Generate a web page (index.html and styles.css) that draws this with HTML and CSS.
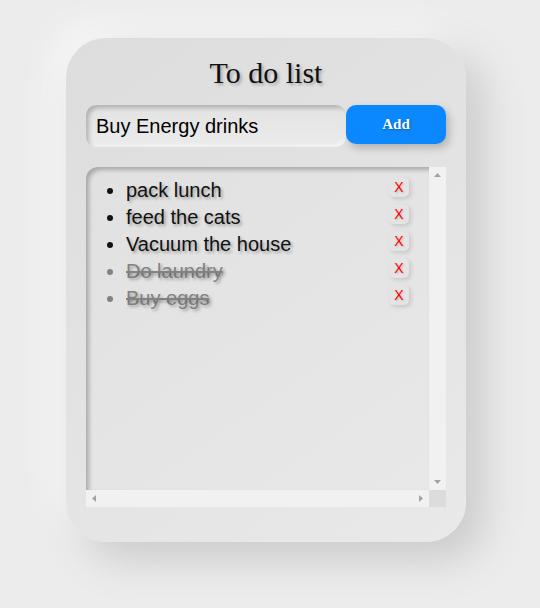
FILE: index.html
```html
<!DOCTYPE html>
<html lang="en">
<head>
<meta charset="utf-8">
<title>To do list</title>
<link rel="stylesheet" href="styles.css">
</head>
<body>
  <div class="card">
    <h1 class="title">To do list</h1>
    <div class="entry">
      <input class="entry-input" type="text" value="Buy Energy drinks">
      <button class="add-btn">Add</button>
    </div>
    <div class="list-box">
      <div class="list-view">
        <ul class="todo-list">
          <li class="todo"><button class="del-btn">X</button><span class="todo-text">pack lunch</span></li>
          <li class="todo"><button class="del-btn">X</button><span class="todo-text">feed the cats</span></li>
          <li class="todo"><button class="del-btn">X</button><span class="todo-text">Vacuum the house</span></li>
          <li class="todo done"><button class="del-btn">X</button><span class="todo-text">Do laundry</span></li>
          <li class="todo done"><button class="del-btn">X</button><span class="todo-text">Buy eggs</span></li>
        </ul>
      </div>
      <div class="vbar">
        <svg class="arrow" width="17" height="17" viewBox="0 0 17 17"><path d="M5 10h7l-3.5-4z" fill="#a3a3a3"/></svg>
        <svg class="arrow" width="17" height="17" viewBox="0 0 17 17"><path d="M5 7h7l-3.5 4z" fill="#a3a3a3"/></svg>
      </div>
      <div class="hbar">
        <svg class="arrow" width="17" height="17" viewBox="0 0 17 17"><path d="M10 5v7l-4-3.5z" fill="#a3a3a3"/></svg>
        <svg class="arrow" width="17" height="17" viewBox="0 0 17 17"><path d="M7 5v7l4-3.5z" fill="#a3a3a3"/></svg>
      </div>
      <div class="corner"></div>
    </div>
  </div>
</body>
</html>
```
FILE: styles.css
```css
html {
  min-height: 100%;
  background: #ececec;
}
body {
  margin: 0;
  min-height: 608px;
  box-sizing: border-box;
  padding: 38px 0 0 66px;
  background: #ececec;
  font-family: "Liberation Serif", "Times New Roman", serif;
}
.card {
  width: 400px;
  height: 504px;
  box-sizing: border-box;
  padding: 18px 20px 35px;
  border-radius: 40px;
  background: linear-gradient(145deg, #dddddd, #e9e9e9);
  box-shadow: 18px 18px 40px #cbcbcb, -14px -14px 30px #f7f7f7;
}
.title {
  margin: 0;
  font-size: 30px;
  font-weight: normal;
  line-height: 34px;
  text-align: center;
  color: #111;
  text-shadow: 2px 2px 3px rgba(0,0,0,0.25);
}
.entry {
  display: flex;
  align-items: flex-start;
  margin-top: 15px;
}
.entry-input {
  width: 260px;
  height: 42px;
  box-sizing: border-box;
  border: none;
  outline: none;
  border-radius: 10px;
  padding: 0 0 0 10px;
  font-family: "Liberation Sans", Arial, sans-serif;
  font-size: 20px;
  color: #000;
  background: linear-gradient(180deg, #e3e3e3, #ebebeb);
  box-shadow: inset 3px 3px 4px rgba(0,0,0,0.22), inset -2px -2px 4px rgba(255,255,255,0.5);
}
.add-btn {
  width: 100px;
  height: 39px;
  border: none;
  border-radius: 10px;
  background: #0b88fe;
  color: #fff;
  font-family: "Liberation Serif", "Times New Roman", serif;
  font-weight: bold;
  font-size: 15px;
  text-shadow: 1px 1px 2px rgba(0,0,0,0.3);
  box-shadow: 3px 4px 8px rgba(0,0,0,0.22);
  padding: 0;
}
.list-box {
  margin-top: 20px;
  width: 360px;
  height: 340px;
  display: grid;
  grid-template-columns: 1fr 17px;
  grid-template-rows: 1fr 17px;
}
.list-view {
  overflow: hidden;
  border-radius: 12px 0 0 0;
  background: linear-gradient(145deg, #e1e1e1, #e8e8e8);
  box-shadow: inset 3px 3px 4px rgba(0,0,0,0.25);
}
.vbar {
  background: #f1f1f1;
  display: flex;
  flex-direction: column;
  justify-content: space-between;
}
.hbar {
  background: #f1f1f1;
  display: flex;
  justify-content: space-between;
}
.arrow {
  display: block;
}
.corner {
  background: #dcdcdc;
}
.todo-list {
  margin: 0;
  padding: 10px 20px 0 40px;
}
.todo {
  font-family: "Liberation Sans", Arial, sans-serif;
  font-size: 20px;
  line-height: 27px;
  color: #111;
  text-shadow: 2px 2px 3px rgba(0,0,0,0.3);
}
.todo.done {
  color: #828282;
}
.todo.done .todo-text {
  text-decoration: line-through;
}
.del-btn {
  float: right;
  width: 20px;
  height: 20px;
  margin-top: 0;
  padding: 0;
  border: none;
  border-radius: 5px;
  background: #e4e4e4;
  color: #ff0000;
  font-family: "Liberation Sans", Arial, sans-serif;
  font-size: 14px;
  line-height: 20px;
  text-shadow: 1px 1px 2px rgba(0,0,0,0.2);
  box-shadow: 2px 2px 4px rgba(0,0,0,0.13);
}
```
